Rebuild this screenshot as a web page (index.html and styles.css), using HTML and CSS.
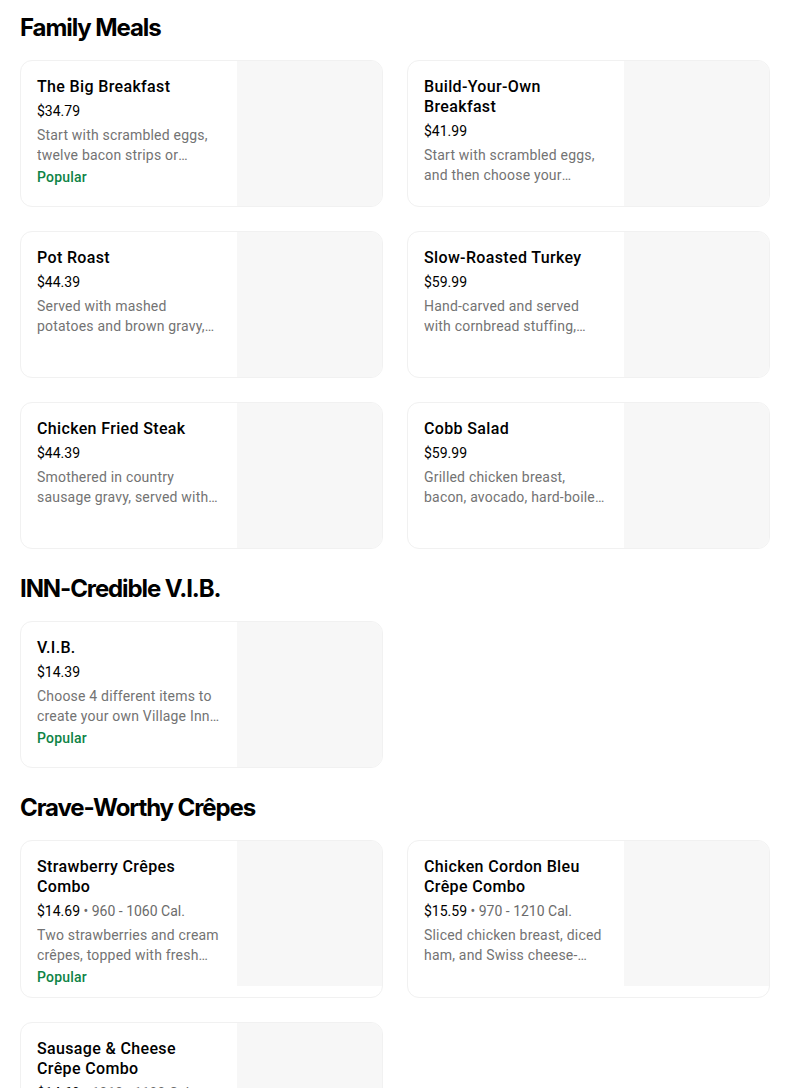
FILE: index.html
```html
<!DOCTYPE html>
<html lang="en">
<head>
<meta charset="utf-8">
<title>Menu</title>
<link rel="stylesheet" href="styles.css">
</head>
<body>
<main class="menu">
  <section class="section">
    <h2 class="section-title">Family Meals</h2>
    <div class="grid">
      <div class="card">
        <div class="info">
          <div class="name">The Big Breakfast</div>
          <div class="price">$34.79</div>
          <div class="desc">Start with scrambled eggs, twelve bacon strips or sausage links, and more</div>
          <div class="badge">Popular</div>
        </div>
        <div class="thumb"></div>
      </div>
      <div class="card">
        <div class="info">
          <div class="name">Build-Your-Own Breakfast</div>
          <div class="price">$41.99</div>
          <div class="desc">Start with scrambled eggs, and then choose your favorites</div>
        </div>
        <div class="thumb"></div>
      </div>
      <div class="card">
        <div class="info">
          <div class="name">Pot Roast</div>
          <div class="price">$44.39</div>
          <div class="desc">Served with mashed potatoes and brown gravy, vegetables and rolls</div>
        </div>
        <div class="thumb"></div>
      </div>
      <div class="card">
        <div class="info">
          <div class="name">Slow-Roasted Turkey</div>
          <div class="price">$59.99</div>
          <div class="desc">Hand-carved and served with cornbread stuffing, gravy and more</div>
        </div>
        <div class="thumb"></div>
      </div>
      <div class="card">
        <div class="info">
          <div class="name">Chicken Fried Steak</div>
          <div class="price">$44.39</div>
          <div class="desc">Smothered in country sausage gravy, served with mashed potatoes</div>
        </div>
        <div class="thumb"></div>
      </div>
      <div class="card">
        <div class="info">
          <div class="name">Cobb Salad</div>
          <div class="price">$59.99</div>
          <div class="desc">Grilled chicken breast, bacon, avocado, hard-boiled eggs and tomatoes</div>
        </div>
        <div class="thumb"></div>
      </div>
    </div>
  </section>

  <section class="section">
    <h2 class="section-title">INN-Credible V.I.B.</h2>
    <div class="grid">
      <div class="card">
        <div class="info">
          <div class="name">V.I.B.</div>
          <div class="price">$14.39</div>
          <div class="desc">Choose 4 different items to create your own Village Inn breakfast</div>
          <div class="badge">Popular</div>
        </div>
        <div class="thumb"></div>
      </div>
    </div>
  </section>

  <section class="section">
    <h2 class="section-title">Crave-Worthy Crêpes</h2>
    <div class="grid">
      <div class="card">
        <div class="info">
          <div class="name">Strawberry Crêpes Combo</div>
          <div class="price">$14.69 <span class="cal">• 960 - 1060 Cal.</span></div>
          <div class="desc">Two strawberries and cream crêpes, topped with fresh strawberries</div>
          <div class="badge">Popular</div>
        </div>
        <div class="thumb"></div>
      </div>
      <div class="card">
        <div class="info">
          <div class="name">Chicken Cordon Bleu Crêpe Combo</div>
          <div class="price">$15.59 <span class="cal">• 970 - 1210 Cal.</span></div>
          <div class="desc">Sliced chicken breast, diced ham, and Swiss cheese-filled crêpes</div>
        </div>
        <div class="thumb"></div>
      </div>
      <div class="card">
        <div class="info">
          <div class="name">Sausage &amp; Cheese Crêpe Combo</div>
          <div class="price">$14.69 <span class="cal">• 1010 - 1190 Cal.</span></div>
          <div class="desc">Sausage, scrambled eggs and cheddar cheese wrapped in crêpes</div>
        </div>
        <div class="thumb"></div>
      </div>
    </div>
  </section>
</main>
</body>
</html>
```

FILE: styles.css
```css
html, body {
  margin: 0;
  padding: 0;
  background: #ffffff;
}

body {
  font-family: Roboto, "Noto Sans", "Liberation Sans", sans-serif;
  color: #000000;
}

.menu {
  padding: 12px 20px 40px 20px;
  display: flex;
  flex-direction: column;
  gap: 24px;
}

.section-title {
  margin: 0 0 16px 0;
  font-family: Inter, "Liberation Sans", sans-serif;
  font-size: 24px;
  line-height: 32px;
  font-weight: 700;
  letter-spacing: -1.1px;
}

.grid {
  display: grid;
  grid-template-columns: 363px 363px;
  column-gap: 24px;
  row-gap: 24px;
  align-items: stretch;
}

.card {
  display: flex;
  align-items: flex-start;
  border: 1px solid #f1f1f1;
  border-radius: 12px;
  overflow: hidden;
  background: #ffffff;
}

.info {
  flex: 1;
  min-width: 0;
  padding: 16px 16px 10px 16px;
}

.name {
  font-size: 16px;
  line-height: 20px;
  font-weight: 500;
  letter-spacing: 0.35px;
  color: #000;
}

.price {
  margin-top: 4px;
  font-size: 14px;
  line-height: 20px;
  color: #000;
}

.cal {
  color: #6b6b6b;
}

.desc {
  margin-top: 4px;
  font-size: 14px;
  line-height: 20px;
  letter-spacing: 0.2px;
  color: #737373;
  display: -webkit-box;
  -webkit-line-clamp: 2;
  -webkit-box-orient: vertical;
  overflow: hidden;
}

.badge {
  margin-top: 2px;
  font-size: 14px;
  line-height: 20px;
  font-weight: 500;
  letter-spacing: 0.2px;
  color: #0e8345;
}

.thumb {
  flex: 0 0 145px;
  height: 145px;
  background: #f7f7f7;
}
```
